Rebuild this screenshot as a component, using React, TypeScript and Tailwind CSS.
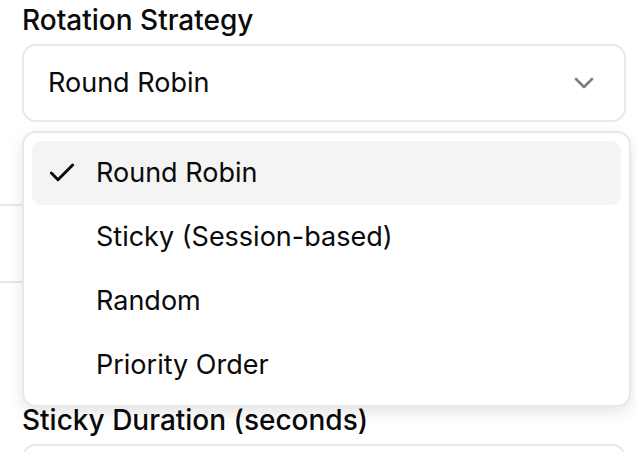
import { Check, ChevronDown } from 'lucide-react';

const options = ['Round Robin', 'Sticky (Session-based)', 'Random', 'Priority Order'];

export default function App() {
  const selected = 'Round Robin';

  return (
    <div className="relative h-[452px] w-[636px] overflow-hidden bg-white font-['Inter',sans-serif] text-[#0a0a0a]">
      <div className="pl-[22px] pr-[10px]">
        <label className="block h-10 text-[28px] font-medium leading-10">Rotation Strategy</label>
        <button className="mt-1 flex h-[78px] w-full items-center justify-between rounded-[14px] border-2 border-[#e8e8e8] pl-6 pr-6 text-[27px]">
          <span>{selected}</span>
          <ChevronDown size={32} strokeWidth={2} className="text-[#737373] opacity-90" />
        </button>

        {/* rows under the open menu */}
        <div className="-ml-[22px] mt-[82px] h-[79px] w-[600px] border-y-2 border-[#e8e8e8]" />

        <label className="mt-[117px] block h-10 text-[28px] font-medium leading-10">Sticky Duration (seconds)</label>
        <div className="mt-1 h-[78px] w-full rounded-[14px] border-2 border-[#e8e8e8]" />
      </div>

      <div className="absolute left-[22px] top-[131px] w-[609px] rounded-[14px] border-2 border-[#e8e8e8] bg-white p-2 shadow-[0_6px_16px_rgba(0,0,0,0.1)]">
        {options.map((opt) => (
          <div
            key={opt}
            className={`relative flex h-16 items-center rounded-[10px] pl-[64px] text-[27px] ${
              opt === selected ? 'bg-[#f4f4f3]' : ''
            }`}
          >
            {opt === selected && (
              <Check size={32} strokeWidth={2.2} className="absolute left-[14px] top-4" />
            )}
            {opt}
          </div>
        ))}
      </div>
    </div>
  );
}
